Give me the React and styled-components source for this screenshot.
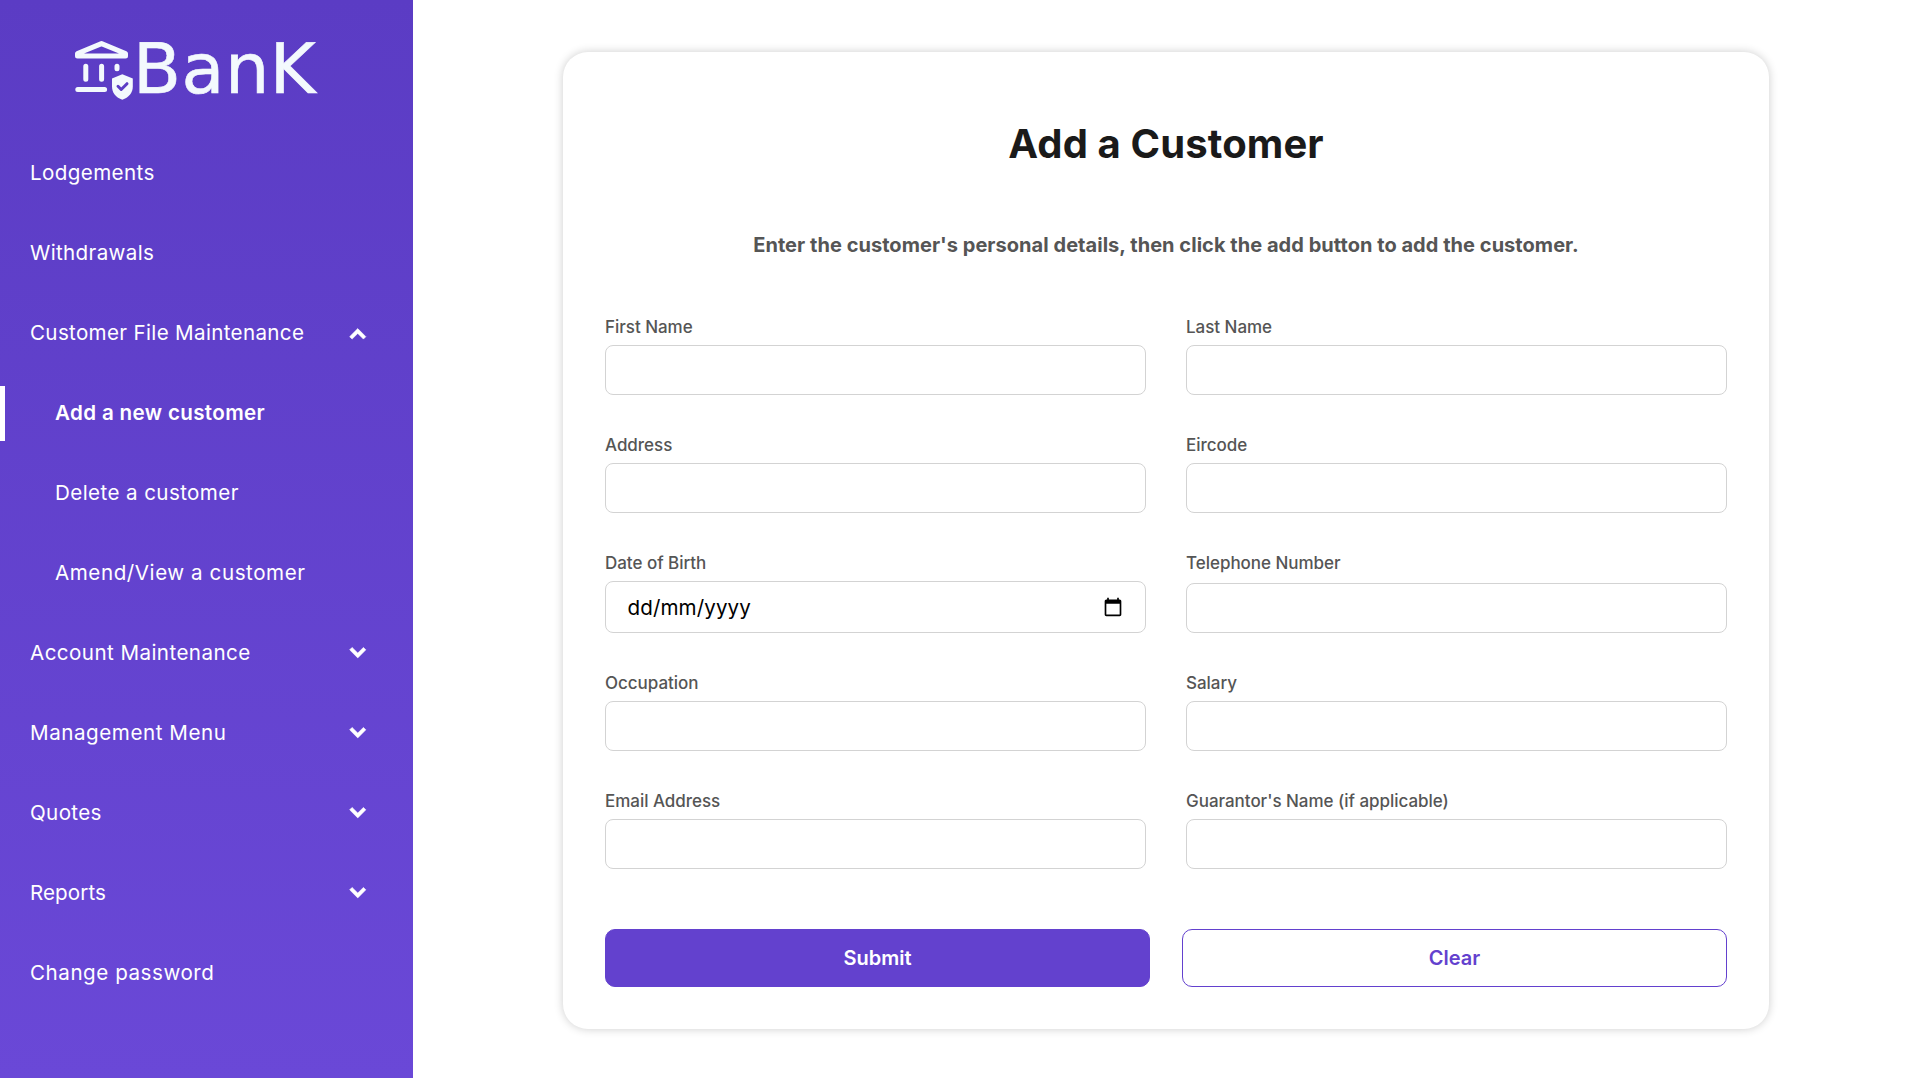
import React from "react";
import styled, { createGlobalStyle, css } from "styled-components";

const GlobalStyle = createGlobalStyle`
  *, *::before, *::after { box-sizing: border-box; }
  body { margin: 0; background: #fff; font-family: Inter, "Liberation Sans", sans-serif; }
`;

const Page = styled.div`
  display: flex;
  height: 1078px;
  overflow: hidden;
`;

const Sidebar = styled.aside`
  width: 413px;
  flex: none;
  background: linear-gradient(to bottom, #5b3cc4, #6a48d7);
  color: #fff;
`;

const Logo = styled.div`
  height: 146px;
  padding-left: 75px;
  display: flex;
  align-items: flex-start;
  color: #f3f9fd;
`;

const LogoMark = styled.svg`
  width: 60px;
  height: 62px;
  margin-top: 39px;
  flex: none;
`;

const LogoText = styled.span`
  font: 400 70px/80px "DejaVu Sans", sans-serif;
  letter-spacing: 0.5px;
  -webkit-text-stroke: 0.6px currentColor;
  margin-top: 29px;
  margin-left: -2px;
`;

const Nav = styled.nav`
  display: flex;
  flex-direction: column;
  gap: 25px;
`;

const NavItem = styled.a`
  display: flex;
  align-items: center;
  justify-content: space-between;
  height: 55px;
  padding: 0 41.5px 0 ${(p) => (p.$sub ? 55 : 30)}px;
  font-size: 20.6px;
  line-height: 30px;
  color: #fff;
  white-space: nowrap;
  ${(p) =>
    p.$active &&
    css`
      font-weight: 600;
      border-left: 5px solid #fff;
      padding-left: 50px;
    `}
`;

const NavLabel = styled.span`
  letter-spacing: ${(p) => p.$spacing}px;
  padding-bottom: 2px;
`;

const Chevron = styled.svg`
  width: 27.5px;
  height: 27.5px;
  fill: currentColor;
  stroke: currentColor;
  stroke-width: 0.5;
  stroke-linejoin: round;
  transform: ${(p) => (p.$up ? "translateY(0.7px) rotate(180deg)" : "translateY(-1.7px)")};
`;

const Main = styled.main`
  flex: 1;
  display: flex;
  justify-content: center;
  align-items: flex-start;
  padding: 52px 1px 0 0;
`;

const Card = styled.form`
  width: 1206px;
  height: 977px;
  padding: 0 42px;
  border-radius: 25px;
  background: #fff;
  box-shadow: 0 0 10px rgba(0, 0, 0, 0.2);
`;

const Title = styled.h1`
  margin: 0;
  padding-top: 68px;
  font-size: 40px;
  line-height: 48px;
  font-weight: 700;
  letter-spacing: 0.12px;
  text-align: center;
  color: #1a1a1a;
`;

const Intro = styled.p`
  margin: 65px 0 0;
  font-size: 20px;
  line-height: 24px;
  font-weight: 700;
  letter-spacing: 0.04px;
  text-align: center;
  color: #555;
`;

const Fields = styled.div`
  display: grid;
  grid-template-columns: 1fr 1fr;
  column-gap: 40px;
  row-gap: 40px;
  margin-top: 60px;
`;

const Field = styled.label`
  display: flex;
  flex-direction: column;
  gap: 7px;
  justify-content: space-between;
`;

const FieldLabel = styled.span`
  font-size: 17px;
  line-height: 21px;
  font-weight: 500;
  letter-spacing: -0.03px;
  color: #555;
`;

const inputBox = css`
  width: 100%;
  border: 1px solid #d3d3d3;
  border-radius: 8px;
  background: #fff;
`;

const TextInput = styled.input`
  ${inputBox}
  height: 50px;
  padding: 12px 20px;
  font: 400 20px Inter, sans-serif;
  outline: none;
`;

const DateInput = styled.div`
  ${inputBox}
  height: 52px;
  padding: 0 22.5px 0 21.5px;
  display: flex;
  align-items: center;
  justify-content: space-between;
  font-size: 20.6px;
  color: #000;
`;

const DateText = styled.span`
  letter-spacing: 0.1px;
`;

const CalendarIcon = styled.svg`
  width: 20px;
  height: 20px;
`;

const Actions = styled.div`
  display: grid;
  grid-template-columns: 1fr 1fr;
  gap: 32px;
  margin-top: 60px;
`;

const Button = styled.button`
  height: 58px;
  border: 1px solid #6341ce;
  border-radius: 10px;
  background: ${(p) => (p.$primary ? "#6341ce" : "#fff")};
  color: ${(p) => (p.$primary ? "#fff" : "#6341ce")};
  font: 600 20px Inter, sans-serif;
`;

const items = [
  { label: "Lodgements", spacing: 0.38 },
  { label: "Withdrawals", spacing: 0.35 },
  { label: "Customer File Maintenance", spacing: 0.33, arrow: "up" },
  { label: "Add a new customer", spacing: 0.34, sub: true, active: true },
  { label: "Delete a customer", spacing: 0.4, sub: true },
  { label: "Amend/View a customer", spacing: 0.56, sub: true },
  { label: "Account Maintenance", spacing: 0.43, arrow: "down" },
  { label: "Management Menu", spacing: 0.55, arrow: "down" },
  { label: "Quotes", spacing: 0.36, arrow: "down" },
  { label: "Reports", spacing: 0.08, arrow: "down" },
  { label: "Change password", spacing: 0.54 },
];

const fields = [
  "First Name",
  "Last Name",
  "Address",
  "Eircode",
  "Date of Birth",
  "Telephone Number",
  "Occupation",
  "Salary",
  "Email Address",
  "Guarantor's Name (if applicable)",
];

function BankMark() {
  return (
    <LogoMark viewBox="0 0 60 62" fill="none" stroke="currentColor" strokeWidth="5" strokeLinecap="round" strokeLinejoin="round">
      <path d="M2.5 14.5 26.5 4.6 50.5 14.5V17H2.5Z" />
      <path d="M10.8 27.3V40.3M26.6 27.3V40.3M42 27.3V29.8M2.8 50.5H29.6" />
      <path
        d="M47.3 35.2 57.8 39.5V47.5C57.8 54 53.6 58.5 47.3 60.8C41 58.5 37 54 37 47.5V39.5Z"
        fill="currentColor"
        stroke="none"
      />
      <path d="M43 47.3 46.2 50.5 52 44.7" stroke="#5b3dc5" strokeWidth="3" />
    </LogoMark>
  );
}

export default function App() {
  return (
    <>
      <GlobalStyle />
      <Page>
        <Sidebar>
          <Logo>
            <BankMark />
            <LogoText>BanK</LogoText>
          </Logo>
          <Nav>
            {items.map((item) => (
              <NavItem key={item.label} $sub={item.sub} $active={item.active}>
                <NavLabel $spacing={item.spacing}>{item.label}</NavLabel>
                {item.arrow && (
                  <Chevron viewBox="0 0 24 24" $up={item.arrow === "up"}>
                    <path d="M16.939 7.939 12 12.879l-4.939-4.94-2.122 2.122L12 17.121l7.061-7.06z" />
                  </Chevron>
                )}
              </NavItem>
            ))}
          </Nav>
        </Sidebar>
        <Main>
          <Card>
            <Title>Add a Customer</Title>
            <Intro>Enter the customer's personal details, then click the add button to add the customer.</Intro>
            <Fields>
              {fields.map((name) => (
                <Field key={name}>
                  <FieldLabel>{name}</FieldLabel>
                  {name === "Date of Birth" ? (
                    <DateInput>
                      <DateText>dd/mm/yyyy</DateText>
                      <CalendarIcon viewBox="0 0 24 24">
                        <path d="M20 3h-1V1h-2v2H7V1H5v2H4c-1.100 0-2 .9-2 2v16c0 1.100.9 2 2 2h16c1.100 0 2-.9 2-2V5c0-1.100-.9-2-2-2zm0 18H4V8h16v13z" />
                      </CalendarIcon>
                    </DateInput>
                  ) : (
                    <TextInput type="text" />
                  )}
                </Field>
              ))}
            </Fields>
            <Actions>
              <Button type="button" $primary>Submit</Button>
              <Button type="button">Clear</Button>
            </Actions>
          </Card>
        </Main>
      </Page>
    </>
  );
}
